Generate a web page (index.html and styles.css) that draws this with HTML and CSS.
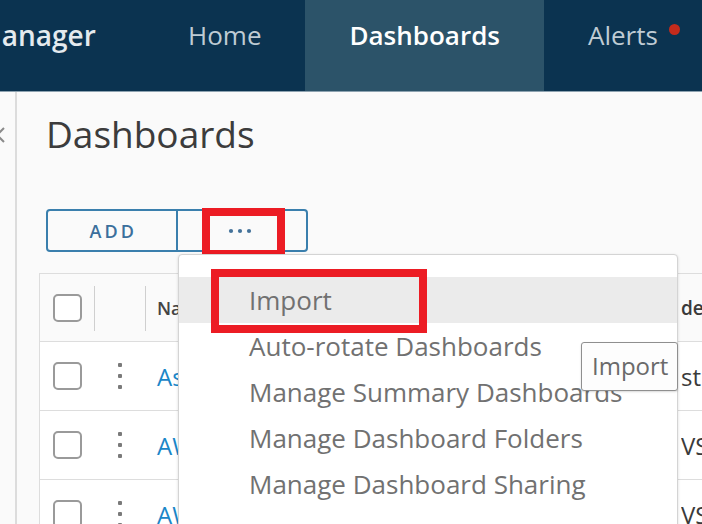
FILE: index.html
```html
<!DOCTYPE html>
<html>
<head>
<meta charset="utf-8">
<link rel="stylesheet" href="styles.css">
</head>
<body>
<header class="topbar">
  <div class="brand">Manager</div>
  <nav class="nav">
    <a class="nav-item">Home</a>
    <a class="nav-item active">Dashboards</a>
    <a class="nav-item alerts">Alerts<span class="badge"></span></a>
  </nav>
</header>
<div class="page">
  <aside class="sidebar">
    <svg class="chev" width="15" height="20" viewBox="0 0 15 20"><polyline points="4,3 -3,10 4,17" fill="none" stroke="#8a8a8a" stroke-width="2"/></svg>
  </aside>
  <main class="content">
    <h1 class="title">Dashboards</h1>
    <div class="toolbar">
      <div class="btn-group">
        <button class="btn">ADD</button>
        <button class="btn more">
          <svg width="24" height="6" viewBox="0 0 24 6"><circle cx="3" cy="3" r="2.1" fill="#44729a"/><circle cx="12" cy="3" r="2.1" fill="#44729a"/><circle cx="21" cy="3" r="2.1" fill="#44729a"/></svg>
          <span class="mark mark-more"></span>
        </button>
      </div>
      <div class="menu">
        <div class="menu-item active">Import<span class="mark mark-import"></span></div>
        <div class="menu-item">Auto-rotate Dashboards</div>
        <div class="menu-item">Manage Summary Dashboards</div>
        <div class="menu-item">Manage Dashboard Folders</div>
        <div class="menu-item">Manage Dashboard Sharing</div>
      </div>
      <div class="tooltip">Import</div>
    </div>
    <div class="grid">
      <div class="row head">
        <div class="cell c-check"><span class="checkbox"></span></div>
        <div class="cell c-act"><span class="sep"></span></div>
        <div class="cell c-name"><span class="sep"></span>Name</div>
        <div class="cell c-last">de</div>
      </div>
      <div class="row">
        <div class="cell c-check"><span class="checkbox"></span></div>
        <div class="cell c-act"><span class="kebab"><i></i><i></i><i></i></span></div>
        <div class="cell c-name"><a class="link">Assessment Overview</a></div>
        <div class="cell c-last">st</div>
      </div>
      <div class="row">
        <div class="cell c-check"><span class="checkbox"></span></div>
        <div class="cell c-act"><span class="kebab"><i></i><i></i><i></i></span></div>
        <div class="cell c-name"><a class="link">AWS Overview</a></div>
        <div class="cell c-last">VS</div>
      </div>
      <div class="row">
        <div class="cell c-check"><span class="checkbox"></span></div>
        <div class="cell c-act"><span class="kebab"><i></i><i></i><i></i></span></div>
        <div class="cell c-name"><a class="link">AWS Troubleshooting</a></div>
        <div class="cell c-last">VS</div>
      </div>
    </div>
  </main>
</div>
</body>
</html>
```
FILE: styles.css
```css
* { box-sizing: border-box; }
html, body { margin: 0; padding: 0; }
body {
  width: 702px;
  height: 524px;
  overflow: hidden;
  background: #fafafa;
  font-family: "Open Sans", "DejaVu Sans", sans-serif;
}
.topbar {
  height: 92px;
  background: #0b3350;
  border-bottom: 1px solid #8da2b0;
  display: flex;
  align-items: stretch;
  overflow: hidden;
}
.brand {
  margin-left: -24px;
  padding-top: 15px;
  font-size: 28px;
  line-height: 40px;
  font-weight: 600;
  color: #e4eaee;
  width: 168px;
  flex: none;
  white-space: nowrap;
}
.nav { display: flex; }
.nav-item {
  position: relative;
  padding: 15px 44px 0;
  font-size: 26px;
  line-height: 40px;
  color: #bfcbd4;
  font-weight: 400;
  white-space: nowrap;
}
.nav-item.active {
  background: #2c5369;
  color: #ffffff;
  font-weight: 600;
}
.badge {
  position: absolute;
  top: 24px;
  right: 22px;
  width: 11px;
  height: 11px;
  border-radius: 50%;
  background: #c42b1c;
}
.page {
  display: flex;
  height: 432px;
  overflow: hidden;
}
.sidebar {
  width: 17px;
  flex: none;
  border-right: 2px solid #dcdcdc;
  padding-top: 33px;
}
.chev { display: block; }
.content {
  flex: 1;
  padding-left: 22px;
  min-width: 0;
  overflow: hidden;
}
.title {
  margin: 20px 0 0 7px;
  font-size: 37px;
  line-height: 44px;
  font-weight: 400;
  color: #3c3c3c;
}
.toolbar {
  position: relative;
  margin-top: 53px;
  margin-left: 7px;
  height: 43px;
}
.btn-group {
  display: flex;
  width: 262px;
  height: 43px;
  border: 2px solid #3a7fad;
  border-radius: 4px;
  background: #fafafa;
}
.btn {
  position: relative;
  flex: 1;
  border: 0;
  background: transparent;
  font-family: inherit;
  font-size: 18px;
  font-weight: 600;
  letter-spacing: 3px;
  color: #3b6f9c;
  padding: 0 0 0 3px;
  display: flex;
  align-items: center;
  justify-content: center;
}
.btn.more { border-left: 2px solid #3a7fad; padding: 0 4px 0 0; }
.mark {
  position: absolute;
  border: 8px solid #ec1c24;
}
.mark-more {
  left: 24px;
  top: -3px;
  width: 83px;
  height: 50px;
}
.menu {
  position: absolute;
  left: 132px;
  top: 45px;
  width: 500px;
  height: 300px;
  background: #ffffff;
  border: 1px solid #d4d4d4;
  border-radius: 4px;
  box-shadow: 0 1px 3px rgba(0,0,0,0.15);
  padding-top: 22px;
  z-index: 2;
}
.menu-item {
  position: relative;
  height: 46px;
  line-height: 46px;
  padding-left: 70px;
  font-size: 26px;
  color: #717171;
  white-space: nowrap;
}
.menu-item.active { background: #ebebeb; }
.mark-import {
  left: 32px;
  top: -8px;
  width: 216px;
  height: 64px;
}
.tooltip {
  position: absolute;
  left: 535px;
  top: 133px;
  width: 97px;
  height: 49px;
  background: #fdfdfd;
  border: 1px solid #8f8f8f;
  border-radius: 3px;
  box-shadow: 0 1px 2px rgba(0,0,0,0.15);
  font-size: 24px;
  line-height: 46px;
  padding-left: 10px;
  color: #6a6a6a;
  z-index: 3;
}
.grid {
  margin-top: 21px;
  width: 700px;
  border: 1px solid #dddddd;
  border-right: 0;
  background: #ffffff;
}
.row {
  display: flex;
  height: 69px;
  border-top: 1px solid #dddddd;
  align-items: center;
}
.row.head {
  border-top: 0;
  height: 67px;
  background: #fafafa;
  font-size: 18px;
  font-weight: 600;
  color: #444444;
}
.cell {
  position: relative;
  height: 100%;
  display: flex;
  align-items: center;
}
.c-check { width: 54px; padding-left: 13px; flex: none; }
.c-act { width: 51px; flex: none; justify-content: center; }
.c-name { width: 536px; flex: none; padding-left: 12px; overflow: hidden; white-space: nowrap; }
.c-last { flex: 1; font-size: 24px; color: #3a3a3a; white-space: nowrap; overflow: hidden; }
.row.head .c-last { font-size: 19px; }
.sep {
  position: absolute;
  left: 0;
  top: 12px;
  bottom: 10px;
  border-left: 1px solid #cfcfcf;
}
.checkbox {
  display: block;
  width: 29px;
  height: 28px;
  border: 2px solid #9a9a9a;
  border-radius: 5px;
  background: #ffffff;
}
.kebab {
  display: flex;
  flex-direction: column;
  gap: 7px;
}
.kebab i {
  display: block;
  width: 4px;
  height: 4px;
  border-radius: 1px;
  background: #7a7a7a;
}
.link {
  font-size: 24px;
  color: #1a86c8;
}
```
